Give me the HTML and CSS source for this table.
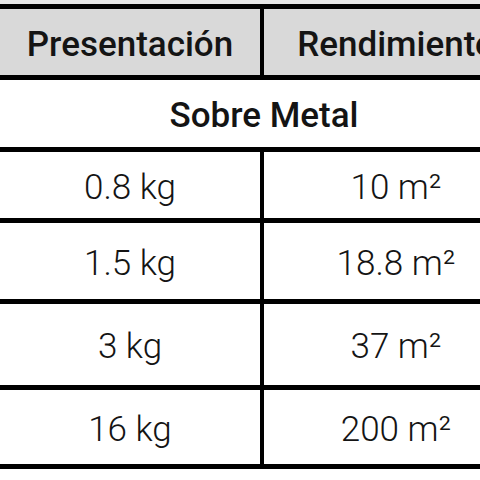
FILE: index.html
```html
<!DOCTYPE html>
<html lang="es">
<head>
<meta charset="utf-8">
<title>Rendimiento</title>
<link rel="stylesheet" href="styles.css">
</head>
<body>
<div class="table">
  <div class="cell head">Presentación</div>
  <div class="cell head">Rendimiento</div>
  <div class="cell section">Sobre Metal</div>
  <div class="cell r1">0.8 kg</div>
  <div class="cell r1">10 m²</div>
  <div class="cell r2">1.5 kg</div>
  <div class="cell r2">18.8 m²</div>
  <div class="cell r3">3 kg</div>
  <div class="cell r3">37 m²</div>
  <div class="cell r4">16 kg</div>
  <div class="cell r4">200 m²</div>
</div>
</body>
</html>
```
FILE: styles.css
```css
html, body {
  margin: 0;
  padding: 0;
}
body {
  width: 480px;
  height: 480px;
  overflow: hidden;
  background: linear-gradient(#e6e6e6 4px, #ffffff 4px);
  padding-top: 4px;
  box-sizing: border-box;
  font-family: Roboto, "Liberation Sans", sans-serif;
  color: #141414;
}
.table {
  margin-left: -5px;
  width: 538px;
  box-sizing: border-box;
  background: #000;
  padding: 5px;
  display: grid;
  grid-template-columns: 260px 264px;
  grid-template-rows: 66px 67px 66px 76px 81px 74px;
  column-gap: 4px;
  row-gap: 5px;
}
.cell {
  background: #fff;
  display: flex;
  align-items: center;
  justify-content: center;
  font-size: 35px;
  font-weight: 300;
  padding-top: 4px;
  box-sizing: border-box;
  white-space: nowrap;
}
.head {
  background: #d9d9d9;
  font-weight: 500;
  padding-top: 5px;
}
.section {
  grid-column: 1 / span 2;
  font-weight: 500;
  padding-top: 3px;
}
```
